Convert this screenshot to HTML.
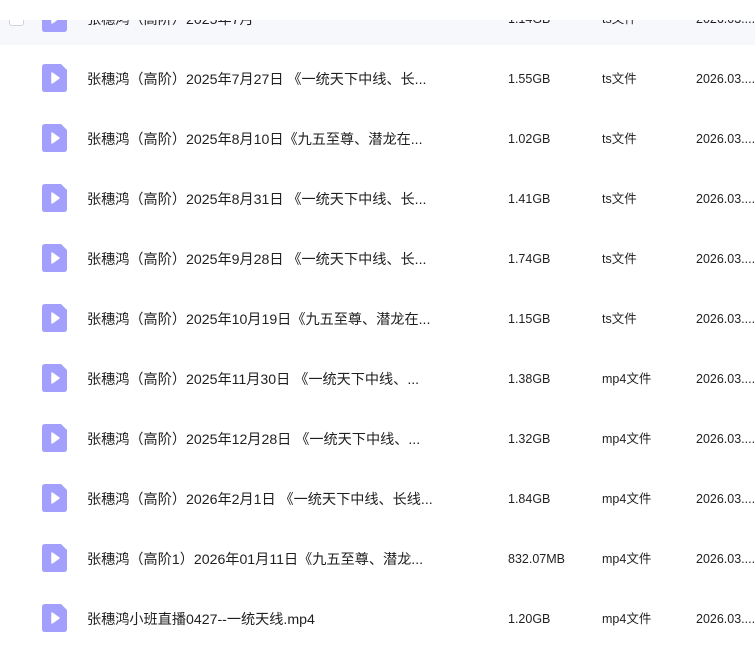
<!DOCTYPE html>
<html><head><meta charset="utf-8"><style>
*{margin:0;padding:0;box-sizing:border-box}
body{width:755px;height:654px;overflow:hidden;background:#fff;position:relative;font-family:"Liberation Sans","Noto Sans CJK SC",sans-serif;color:#1f1f1f;font-size:14px}
.row{position:absolute;left:0;width:755px;height:60px}
.ic{position:absolute;left:42px;top:16px;width:25px;height:28px}
.t{position:absolute;top:1px;line-height:60px;white-space:nowrap;font-size:14.15px}
.n{left:87px}
.s{left:508px;font-size:12.5px}
.y{left:602px;font-size:12.5px}
.d{left:696px;font-size:12.5px}
.hdr{position:absolute;left:0;top:0;width:755px;height:20px;background:#fff;z-index:5}
.cb{position:absolute;left:9px;top:10px;width:15px;height:15px;border:1px solid #d0d3da;border-radius:3px;background:#fff}
</style></head><body>
<div class="hdr"></div>
<div class="row" style="top:-15px;background:#f7f8fb;height:60px">
<div class="cb" style="top:26px"></div>
</div>
<svg width="0" height="0" style="position:absolute"><defs>
<symbol id="fi" viewBox="0 0 25 28"><path d="M3 0H19L25 6V25Q25 28 22 28H3Q0 28 0 25V3Q0 0 3 0Z" fill="#a3a0fd"/><path d="M10 9L17 14L10 19Z" fill="#fff" stroke="#fff" stroke-width="1.5" stroke-linejoin="round"/></symbol>
</defs></svg>
<div class="row" style="top:-12px"><svg class="ic" style="top:16px"><use href="#fi"/></svg><div class="t n">张穗鸿（高阶）2025年7月</div><div class="t s">1.14GB</div><div class="t y">ts文件</div><div class="t d">2026.03....</div></div>
<div class="row" style="top:48px"><svg class="ic"><use href="#fi"/></svg><div class="t n">张穗鸿（高阶）2025年7月27日 《一统天下中线、长...</div><div class="t s">1.55GB</div><div class="t y">ts文件</div><div class="t d">2026.03....</div></div>
<div class="row" style="top:108px"><svg class="ic"><use href="#fi"/></svg><div class="t n">张穗鸿（高阶）2025年8月10日《九五至尊、潜龙在...</div><div class="t s">1.02GB</div><div class="t y">ts文件</div><div class="t d">2026.03....</div></div>
<div class="row" style="top:168px"><svg class="ic"><use href="#fi"/></svg><div class="t n">张穗鸿（高阶）2025年8月31日 《一统天下中线、长...</div><div class="t s">1.41GB</div><div class="t y">ts文件</div><div class="t d">2026.03....</div></div>
<div class="row" style="top:228px"><svg class="ic"><use href="#fi"/></svg><div class="t n">张穗鸿（高阶）2025年9月28日 《一统天下中线、长...</div><div class="t s">1.74GB</div><div class="t y">ts文件</div><div class="t d">2026.03....</div></div>
<div class="row" style="top:288px"><svg class="ic"><use href="#fi"/></svg><div class="t n">张穗鸿（高阶）2025年10月19日《九五至尊、潜龙在...</div><div class="t s">1.15GB</div><div class="t y">ts文件</div><div class="t d">2026.03....</div></div>
<div class="row" style="top:348px"><svg class="ic"><use href="#fi"/></svg><div class="t n">张穗鸿（高阶）2025年11月30日 《一统天下中线、...</div><div class="t s">1.38GB</div><div class="t y">mp4文件</div><div class="t d">2026.03....</div></div>
<div class="row" style="top:408px"><svg class="ic"><use href="#fi"/></svg><div class="t n">张穗鸿（高阶）2025年12月28日 《一统天下中线、...</div><div class="t s">1.32GB</div><div class="t y">mp4文件</div><div class="t d">2026.03....</div></div>
<div class="row" style="top:468px"><svg class="ic"><use href="#fi"/></svg><div class="t n">张穗鸿（高阶）2026年2月1日 《一统天下中线、长线...</div><div class="t s">1.84GB</div><div class="t y">mp4文件</div><div class="t d">2026.03....</div></div>
<div class="row" style="top:528px"><svg class="ic"><use href="#fi"/></svg><div class="t n">张穗鸿（高阶1）2026年01月11日《九五至尊、潜龙...</div><div class="t s">832.07MB</div><div class="t y">mp4文件</div><div class="t d">2026.03....</div></div>
<div class="row" style="top:588px"><svg class="ic"><use href="#fi"/></svg><div class="t n">张穗鸿小班直播0427--一统天线.mp4</div><div class="t s">1.20GB</div><div class="t y">mp4文件</div><div class="t d">2026.03....</div></div>
</body></html>
